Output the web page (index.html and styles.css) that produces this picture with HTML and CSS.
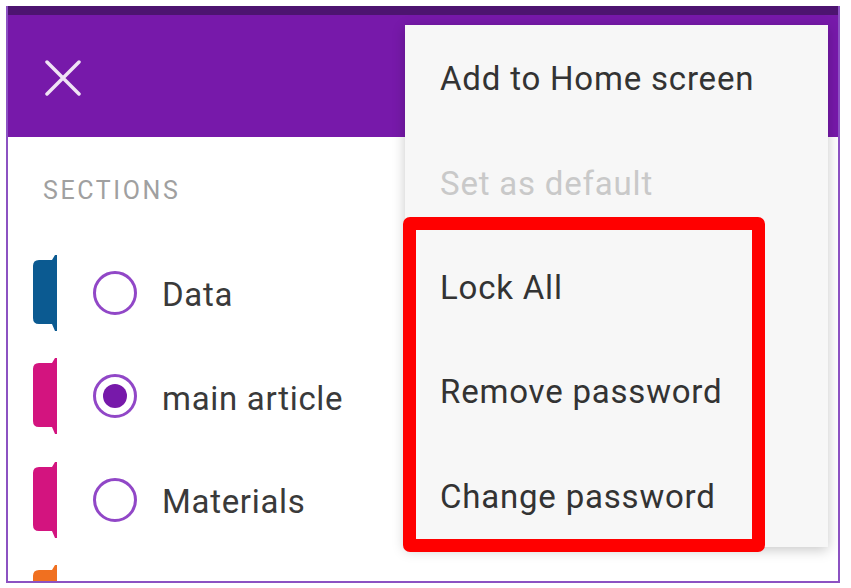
FILE: index.html
```html
<!DOCTYPE html>
<html>
<head>
<meta charset="utf-8">
<link rel="stylesheet" href="styles.css">
</head>
<body>
<div class="frame">
  <header class="appbar">
    <svg class="close" width="36" height="36" viewBox="0 0 36 36"><path d="M2 2 L34 34 M34 2 L2 34" stroke="#efe3f5" stroke-width="3.5" stroke-linecap="round"/></svg>
  </header>
  <div class="sidebar">
    <div class="label">SECTIONS</div>
    <div class="row">
      <svg class="tab" width="25" height="76" viewBox="0 0 25 76"><path d="M7 5 H20 L23 0 H25 V76 H23 L20 69 H7 Q1 69 1 63 V11 Q1 5 7 5 Z" fill="#0b5a91"/></svg>
      <span class="radio"></span>
      <span class="name">Data</span>
    </div>
    <div class="row">
      <svg class="tab" width="25" height="76" viewBox="0 0 25 76"><path d="M7 5 H20 L23 0 H25 V76 H23 L20 69 H7 Q1 69 1 63 V11 Q1 5 7 5 Z" fill="#d3147f"/></svg>
      <span class="radio on"></span>
      <span class="name">main article</span>
    </div>
    <div class="row">
      <svg class="tab" width="25" height="76" viewBox="0 0 25 76"><path d="M7 5 H20 L23 0 H25 V76 H23 L20 69 H7 Q1 69 1 63 V11 Q1 5 7 5 Z" fill="#d3147f"/></svg>
      <span class="radio"></span>
      <span class="name">Materials</span>
    </div>
    <div class="row">
      <svg class="tab" width="25" height="76" viewBox="0 0 25 76"><path d="M7 5 H20 L23 0 H25 V76 H23 L20 69 H7 Q1 69 1 63 V11 Q1 5 7 5 Z" fill="#f07020"/></svg>
    </div>
  </div>
  <div class="menu">
    <div class="item">Add to Home screen</div>
    <div class="item disabled">Set as default</div>
    <div class="item">Lock All</div>
    <div class="item">Remove password</div>
    <div class="item">Change password</div>
  </div>
  <div class="highlight"></div>
</div>
</body>
</html>
```
FILE: styles.css
```css
html, body {
  margin: 0;
  padding: 0;
  background: #ffffff;
}
body {
  font-family: Roboto, "Liberation Sans", sans-serif;
}
.frame {
  position: relative;
  box-sizing: border-box;
  margin: 6px 0 0 6px;
  width: 834px;
  height: 577px;
  border: 2px solid #8c52c2;
  border-top: 0;
  overflow: hidden;
  background: #fff;
}
.appbar {
  box-sizing: border-box;
  height: 131px;
  border-top: 9px solid #4d1470;
  background: #7719aa;
  display: flex;
  align-items: flex-start;
  padding: 45px 0 0 37px;
}
.close {
  display: block;
}
.sidebar {
  padding-left: 24px;
}
.label {
  height: 104px;
  display: flex;
  align-items: center;
  padding-left: 11px;
  padding-top: 2px;
  box-sizing: border-box;
  font-size: 25px;
  letter-spacing: 2.6px;
  color: #a0a0a0;
}
.row {
  height: 103.5px;
  display: flex;
  align-items: center;
}
.tab {
  display: block;
  flex: none;
}
.radio {
  box-sizing: border-box;
  width: 44px;
  height: 44px;
  border: 3px solid #9147c7;
  border-radius: 50%;
  margin-left: 36px;
  margin-right: 25px;
  display: flex;
  align-items: center;
  justify-content: center;
  flex: none;
}
.radio.on::after {
  content: "";
  width: 24px;
  height: 24px;
  border-radius: 50%;
  background: #7719aa;
}
.name {
  font-size: 33px;
  letter-spacing: 0.7px;
  color: #3a3a3a;
  padding-top: 4px;
}
.menu {
  position: absolute;
  left: 397px;
  top: 19px;
  width: 423px;
  height: 522px;
  background: #f7f7f7;
  box-shadow: 0 3px 12px rgba(0, 0, 0, 0.22);
  display: flex;
  flex-direction: column;
}
.item {
  box-sizing: border-box;
  height: 104.4px;
  display: flex;
  align-items: center;
  padding-left: 35px;
  padding-top: 3px;
  font-size: 33px;
  letter-spacing: 0.8px;
  color: #333;
}
.item.disabled {
  color: #c9c9c9;
}
.highlight {
  position: absolute;
  left: 395px;
  top: 211px;
  width: 362px;
  height: 335px;
  box-sizing: border-box;
  border: 13px solid #ff0000;
  border-radius: 7px;
}
```
